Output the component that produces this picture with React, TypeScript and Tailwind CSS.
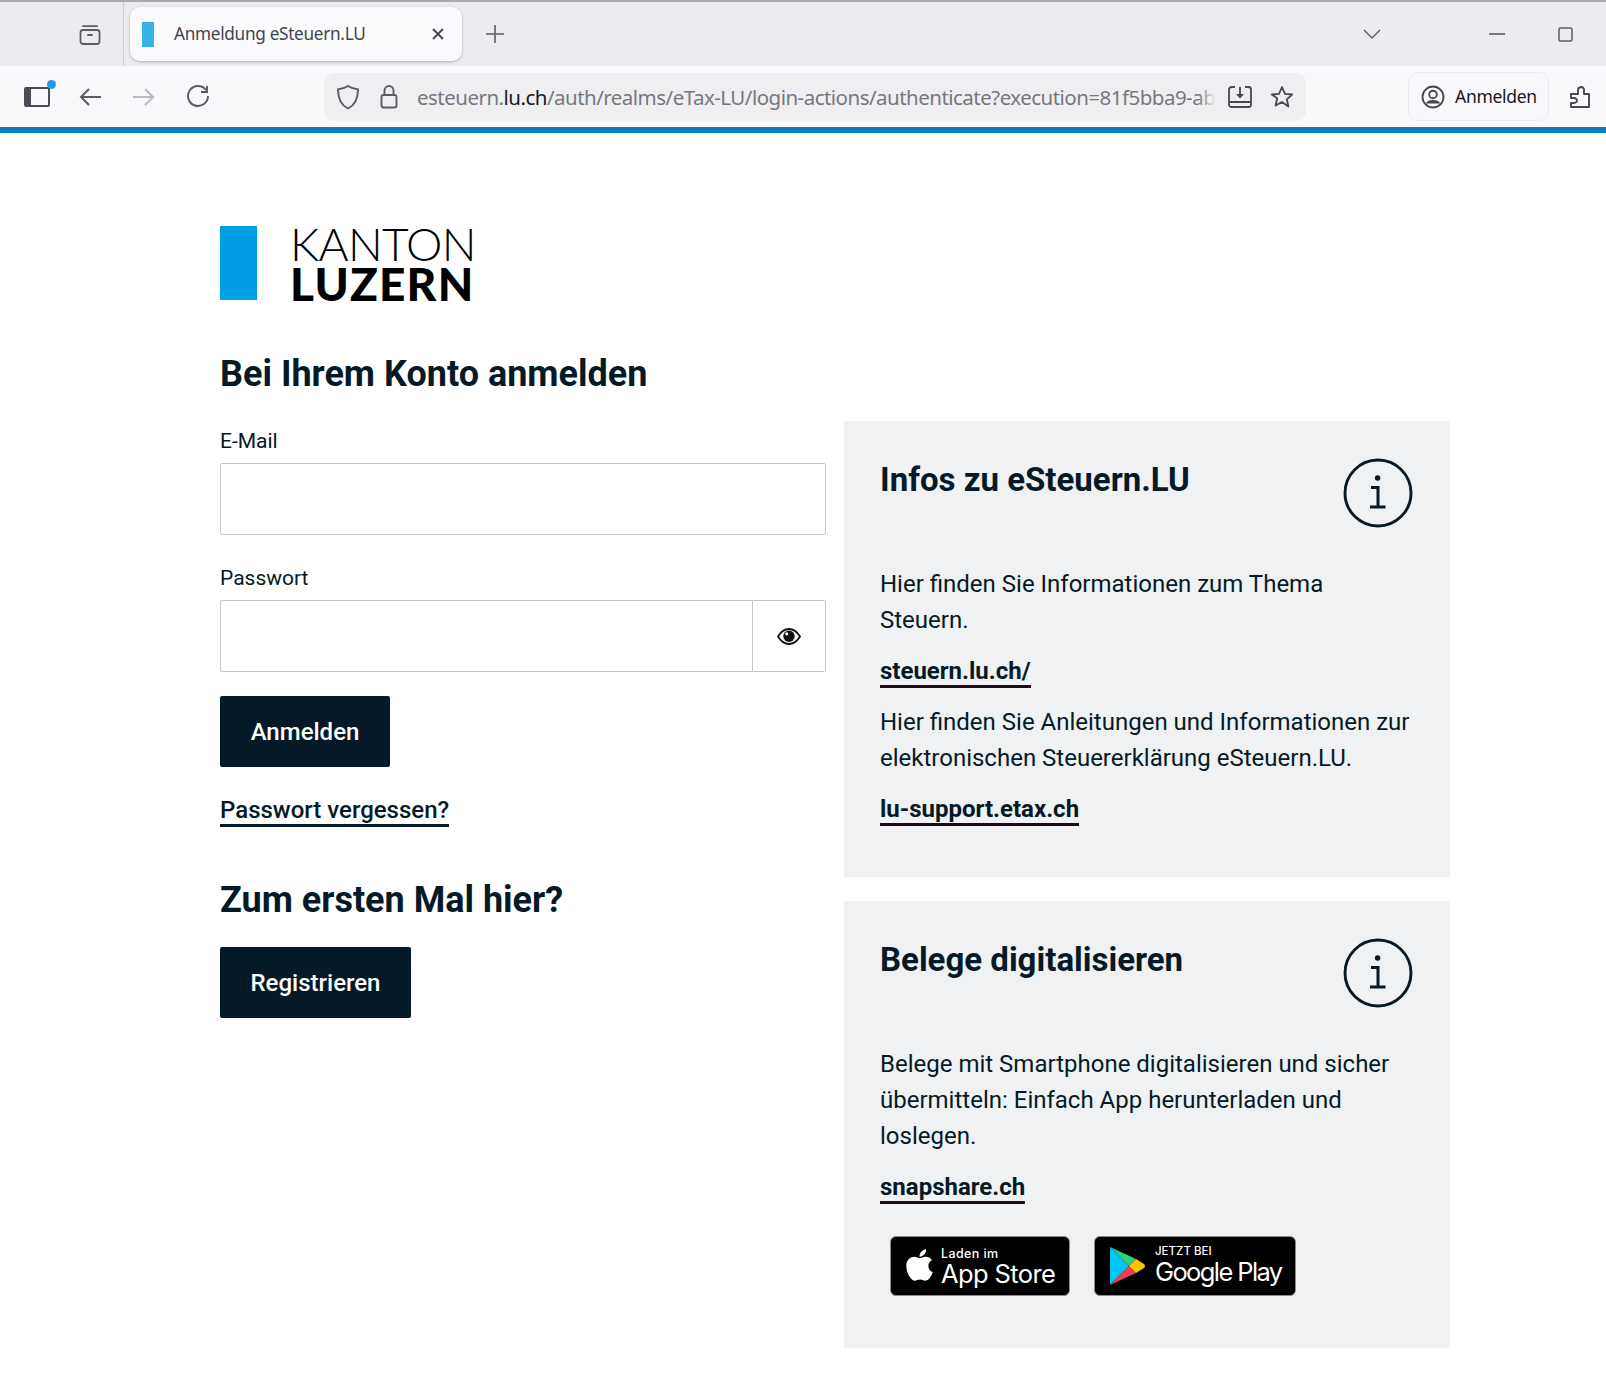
import React from "react";
import { FaApple } from "react-icons/fa";

const InfoIcon = () => (
  <svg width="70" height="70" viewBox="0 0 70 70" fill="none" className="shrink-0">
    <circle cx="35" cy="35" r="33" stroke="#051a26" strokeWidth="2.9" />
    <circle cx="34.6" cy="20" r="2.7" fill="#051a26" />
    <path d="M28 29.500h7v19.500M27 49h15.500" stroke="#051a26" strokeWidth="3" />
  </svg>
);

const Link = ({ children, className = "" }: { children: React.ReactNode; className?: string }) => (
  <a className={"inline-block w-fit border-b-[3px] border-[#1c0a18] text-[24px] font-bold leading-[27px] text-[#051a26] " + className}>{children}</a>
);

const Card = ({ title, children, className = "" }: { title: string; children: React.ReactNode; className?: string }) => (
  <section className={"bg-[#eff1f3] pl-[36px] pr-[37px] " + className}>
    <div className="flex justify-between pt-[37px]">
      <h2 className="mt-[2px] text-[33px] font-bold leading-[40px] text-[#051a26]">{title}</h2>
      <InfoIcon />
    </div>
    {children}
  </section>
);

const Field = ({ label, children, className = "" }: { label: string; children: React.ReactNode; className?: string }) => (
  <div className={className}>
    <label className="block text-[21px] leading-[30px] text-[#051a26]">{label}</label>
    <div className="mt-[7px] flex h-[72px]">{children}</div>
  </div>
);

const DarkButton = ({ children, className = "" }: { children: React.ReactNode; className?: string }) => (
  <button className={"flex h-[71px] items-center justify-center rounded-[2px] bg-[#051a26] text-[24px] font-medium text-white " + className}>{children}</button>
);

const ic = "#5b5b66";

export default function App() {
  return (
    <div className="min-h-[1387px] bg-white font-['Roboto',sans-serif]">
      {/* browser chrome */}
      <div className="border-t-[2px] border-[#a9a9ae] bg-[#ecebef] font-['Noto_Sans',sans-serif]">
        <div className="flex h-[64px] items-center">
          <div className="flex h-full w-[124px] items-center justify-end border-r border-[#cfcfd4] pr-[21px] pb-[1px]">
            <svg width="24" height="24" viewBox="0 0 24 24" fill="none" stroke={ic} strokeWidth="1.8">
              <path d="M5 4.200h14" strokeLinecap="round" />
              <rect x="2.500" y="8" width="19" height="14" rx="2.500" />
              <path d="M10 13h4" strokeLinecap="round" />
            </svg>
          </div>
          <div className="ml-[6px] flex h-[54px] w-[332px] items-center rounded-[10px] bg-[#fbfbfd] pl-[12px] pr-[17px] shadow-[0_1px_3px_rgba(0,0,0,0.25)]">
            <div className="h-[25px] w-[12px] bg-[#38b0e8]" />
            <span className="ml-[20px] text-[17.200px] text-[#44444c] tracking-[-0.3px]">Anmeldung eSteuern.LU</span>
            <svg className="ml-auto" width="14" height="14" viewBox="0 0 14 14" stroke="#44444c" strokeWidth="1.8"><path d="M2 2l10 10M12 2L2 12" /></svg>
          </div>
          <svg className="ml-[23px]" width="20" height="20" viewBox="0 0 20 20" stroke={ic} strokeWidth="1.6"><path d="M10 1v18M1 10h18" /></svg>
          <svg className="ml-auto mr-[108px]" width="18" height="10" viewBox="0 0 18 10" fill="none" stroke={ic} strokeWidth="1.4"><path d="M1 1l8 8 8-8" /></svg>
          <svg className="mr-[53px]" width="16" height="2" viewBox="0 0 16 2" stroke={ic} strokeWidth="1.6"><path d="M0 1h16" /></svg>
          <svg className="mr-[33px]" width="15" height="15" viewBox="0 0 15 15" fill="none" stroke={ic} strokeWidth="1.500"><rect x="1" y="1" width="13" height="13" rx="1.500" /></svg>
        </div>
        <div className="flex h-[61px] items-center bg-[#f9f9fb]">
          <div className="relative ml-[24px] mt-[1px] h-[20px] w-[26px] rounded-[2px] border-[2.500px] border-l-[7px] border-[#4b4b55]">
            <span className="absolute -right-[8px] -top-[9px] h-[9px] w-[9px] rounded-full bg-[#1a9cf0]" />
          </div>
          <svg className="ml-[28px]" width="24" height="22" viewBox="0 0 24 22" fill="none" stroke={ic} strokeWidth="2"><path d="M23 11H3M11 3l-8 8 8 8" /></svg>
          <svg className="ml-[30px]" width="24" height="22" viewBox="0 0 24 22" fill="none" stroke="#b9b9bf" strokeWidth="2"><path d="M1 11h20M13 3l8 8-8 8" /></svg>
          <svg className="ml-[30px]" width="24" height="24" viewBox="0 0 24 24" fill="none" stroke={ic} strokeWidth="1.900"><path d="M20 5a10 10 0 1 0 2 6" /><path d="M21 1v6h-6" /></svg>
          <div className="ml-[114px] flex h-[48px] w-[982px] items-center rounded-[10px] bg-[#efeff2] pl-[12px]">
            <svg width="24" height="26" viewBox="0 0 24 26" fill="none" stroke={ic} strokeWidth="1.900"><path d="M12 2c3 2 6 3 10 3.400C22 14 20 20.500 12 24.500 4 20.500 2 14 2 5.400 6 5 9 4 12 2z" /></svg>
            <svg className="ml-[20px]" width="18" height="25" viewBox="0 0 18 25" fill="none" stroke={ic} strokeWidth="1.900"><path d="M4.500 11V6.500a4.500 4.500 0 0 1 9 0V11" /><rect x="1.500" y="11" width="15" height="12.500" rx="2" /></svg>
            <div className="relative ml-[19px] mt-[1px] w-[799px] overflow-hidden whitespace-nowrap text-[20.500px] tracking-[-0.52px] text-[#77777e]">
              esteuern.<span className="text-[#17171c]">lu.ch</span>/auth/realms/eTax-LU/login-actions/authenticate?execution=81f5bba9-ab
              <span className="absolute right-0 top-0 h-full w-[18px] bg-gradient-to-r from-transparent to-[#efeff2]" />
            </div>
            <svg className="ml-[12px]" width="24" height="24" viewBox="0 0 24 24" fill="none" stroke="#48484f" strokeWidth="1.800"><path d="M7 2H3.500A2.500 2.500 0 0 0 1 4.500v15A2.500 2.500 0 0 0 3.500 22h17a2.500 2.500 0 0 0 2.500-2.500v-15A2.500 2.500 0 0 0 20.500 2H17M1 17h22M12 2v9" /><path d="M8 9h8l-4 4.500z" fill="#48484f" stroke="none" /></svg>
            <svg className="ml-[18px]" width="24" height="24" viewBox="0 0 24 24" fill="none" stroke="#48484f" strokeWidth="1.800" strokeLinejoin="round"><path d="M12 2l3 6.800 7.200.7-5.400 4.800 1.600 7.200L12 17l-6.400 3.500 1.600-7.200L1.800 9.500 9 8.800z" /></svg>
          </div>
          <div className="ml-[102px] flex h-[49px] w-[141px] items-center rounded-[10px] border border-[#ececf0] pl-[12px]">
            <svg width="24" height="24" viewBox="0 0 24 24" fill="none" stroke="#48484f" strokeWidth="1.900"><circle cx="12" cy="12" r="10.500" /><circle cx="12" cy="9.500" r="3.800" /><path d="M4.500 18.500c1.500-2.500 3.500-3.500 7.500-3.500s6 1 7.500 3.500" fill="#48484f" stroke="none" /></svg>
            <span className="ml-[10px] text-[17.500px] tracking-[-0.3px] text-[#17171c]">Anmelden</span>
          </div>
          <svg className="ml-[20px]" width="22" height="24" viewBox="0 0 22 24" fill="none" stroke="#48484f" strokeWidth="1.900" strokeLinejoin="round"><path d="M2 9h7V5.500a3.300 3.300 0 0 1 3-3.500c2 0 3.500 1.500 3 4v3h5v13H2v-4h3c2 0 3-1.500 3-2.500S7 13 5 13H2z" /></svg>
        </div>
      </div>
      <div className="h-[6px] bg-[#0a7fc2]" />

      {/* page */}
      <main className="ml-[220px] w-[1230px] pt-[93px]">
        <div className="flex h-[74px] items-start">
          <div className="h-[74px] w-[37px] bg-[#009fe3]" />
          <div className="ml-[33px] font-['Lato',sans-serif] text-black">
            <div className="h-[36px] text-[46px] font-light leading-[36px] tracking-[-0.7px]">KANTON</div>
            <div className="mt-[5px] h-[33px] text-[46px] font-black leading-[33px] tracking-[1.200px]">LUZERN</div>
          </div>
        </div>
        <h1 className="mt-[52px] text-[36px] font-bold leading-[44px] text-[#051a26]">Bei Ihrem Konto anmelden</h1>
        <div className="mt-[26px] flex items-start gap-[18px]">
          <div className="w-[606px] shrink-0 pt-[4px]">
            <Field label="E-Mail">
              <input className="w-full rounded-[2px] border border-[#c6c6c6] bg-white" />
            </Field>
            <Field label="Passwort" className="mt-[28px]">
              <input className="min-w-0 flex-1 rounded-l-[2px] border border-[#c6c6c6] bg-white" />
              <div className="flex w-[73px] items-center justify-center rounded-r-[2px] border border-l-0 border-[#c6c6c6]">
                <svg width="24" height="17" viewBox="0 0 24 17" fill="none">
                  <path d="M1 8.500C4 3.500 8 1 12 1s8 2.500 11 7.500C20 13.500 16 16 12 16S4 13.500 1 8.500z" stroke="#111" strokeWidth="1.800" />
                  <circle cx="12" cy="8.200" r="5.700" fill="#111" />
                  <circle cx="9.700" cy="5.800" r="1.600" fill="#fff" />
                </svg>
              </div>
            </Field>
            <DarkButton className="mt-[24px] w-[170px]">Anmelden</DarkButton>
            <a className="mt-[29px] block w-fit border-b-[3px] border-[#051a26] text-[24px] font-medium leading-[28px] text-[#051a26]">Passwort vergessen?</a>
            <h2 className="mt-[51px] text-[36px] font-bold leading-[44px] text-[#051a26]">Zum ersten Mal hier?</h2>
            <DarkButton className="mt-[25px] w-[191px]">Registrieren</DarkButton>
          </div>
          <div className="-mt-[1px] flex w-[606px] flex-col gap-[24px]">
            <Card title="Infos zu eSteuern.LU" className="h-[456px]">
              <p className="mt-[38px] text-[24px] leading-[36px] text-[#051a26]">Hier finden Sie Informationen zum Thema<br />Steuern.</p>
              <Link className="mt-[20px]">steuern.lu.ch/</Link>
              <p className="mt-[16px] text-[24px] leading-[36px] text-[#051a26]">Hier finden Sie Anleitungen und Informationen zur elektronischen Steuererklärung eSteuern.LU.</p>
              <Link className="mt-[20px]">lu-support.etax.ch</Link>
            </Card>
            <Card title="Belege digitalisieren" className="h-[447px]">
              <p className="mt-[38px] text-[24px] leading-[36px] text-[#051a26]">Belege mit Smartphone digitalisieren und sicher übermitteln: Einfach App herunterladen und loslegen.</p>
              <Link className="mt-[20px]">snapshare.ch</Link>
              <div className="mt-[32px] ml-[10px] flex gap-[24px] text-white">
                <div className="flex h-[60px] w-[180px] items-center rounded-[6px] border border-[#8a8a8a] bg-black pl-[13px]">
                  <FaApple className="h-[36px] w-[31px] -translate-y-[1px]" />
                  <div className="ml-[6px] mt-[2px] font-['Inter',sans-serif]">
                    <div className="text-[12.500px] font-medium leading-[12px] tracking-[0.4px]">Laden im</div>
                    <div className="text-[25.500px] leading-[27px] tracking-[-0.6px]">App Store</div>
                  </div>
                </div>
                <div className="flex h-[60px] w-[202px] items-center rounded-[6px] border border-[#8a8a8a] bg-black pl-[14px]">
                  <svg width="36" height="40" viewBox="0 0 36 40">
                    <path d="M1 1v38l19-19z" fill="#00c6f7" />
                    <path d="M1 1l19 19 7-7z" fill="#2fd07a" />
                    <path d="M1 39l19-19 7 7z" fill="#ee3f55" />
                    <path d="M27 13l8 5c1.300 1 1.300 3 0 4l-8 5-7-7z" fill="#ffc400" />
                  </svg>
                  <div className="ml-[10px] -mt-[1px] font-['Inter',sans-serif]">
                    <div className="text-[11.500px] font-medium leading-[13px]">JETZT BEI</div>
                    <div className="text-[25.500px] leading-[28px] tracking-[-1.600px]">Google Play</div>
                  </div>
                </div>
              </div>
            </Card>
          </div>
        </div>
      </main>
    </div>
  );
}
